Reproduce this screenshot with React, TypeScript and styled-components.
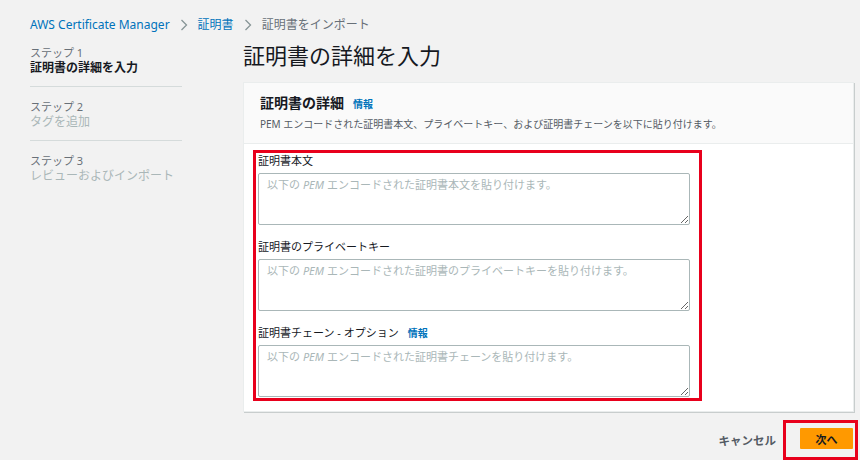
import React from "react";
import styled, { createGlobalStyle } from "styled-components";

const GlobalStyle = createGlobalStyle`
  html, body {
    margin: 0;
    padding: 0;
    background: #f2f3f3;
  }
  body {
    font-family: "Noto Sans", "Noto Sans CJK JP", sans-serif;
    color: #16191f;
  }
`;

const Page = styled.div`
  width: 860px;
  height: 460px;
  box-sizing: border-box;
  padding: 17px 0 0 30px;
  overflow: hidden;
  background: #f2f2f2;
`;

const Breadcrumb = styled.nav`
  display: flex;
  align-items: center;
  gap: 10px;
  height: 16px;
  font-size: 12px;
  line-height: 16px;
`;

const Crumb = styled.span<{ $link?: boolean }>`
  color: ${(p) => (p.$link ? "#0073bb" : "#687078")};
`;

const Layout = styled.div`
  display: grid;
  grid-template-columns: 152px 1fr;
  column-gap: 61px;
  margin-top: 11px;
`;

const Steps = styled.ol`
  list-style: none;
  margin: 0;
  padding: 0;
`;

const Step = styled.li`
  padding: 12px 0 10px;
  border-bottom: 1px solid #d5dbdb;
  &:first-child {
    padding-top: 1px;
  }
  &:last-child {
    border-bottom: none;
  }
`;

const StepLabel = styled.div`
  font-size: 11px;
  line-height: 15px;
  color: #687078;
`;

const StepTitle = styled.div<{ $active?: boolean }>`
  font-size: 12px;
  line-height: 16px;
  font-weight: ${(p) => (p.$active ? 700 : 400)};
  color: ${(p) => (p.$active ? "#16191f" : "#aab7b8")};
`;

const Main = styled.main`
  padding-right: 6px;
`;

const Title = styled.h1`
  margin: 0 0 16px;
  font-size: 22px;
  line-height: 22px;
  font-weight: 400;
  color: #16191f;
`;

const Card = styled.section`
  background: #fff;
  border: 1px solid #eaeded;
  box-shadow: 1px 1px 0 #c8cdcd;
`;

const CardHeader = styled.header`
  background: #fafafa;
  border-bottom: 1px solid #eaeded;
  padding: 11px 16px 12px;
`;

const CardTitle = styled.h2`
  margin: 0;
  display: flex;
  align-items: baseline;
  gap: 9px;
  font-size: 14px;
  line-height: 18px;
  font-weight: 700;
`;

const Info = styled.span`
  font-size: 10px;
  font-weight: 700;
  color: #0073bb;
`;

const CardDesc = styled.p`
  margin: 4px 0 0;
  font-size: 10px;
  line-height: 14px;
  color: #545b64;
`;

const CardBody = styled.div`
  padding: 6px 0 10px 9px;
`;

const Highlight = styled.div`
  border: 3px solid #e8001c;
`;

const Fields = styled(Highlight)`
  width: 432px;
  padding: 0 9px 1px 2px;
`;

const Field = styled.div`
  & + & {
    margin-top: 14px;
  }
`;

const Label = styled.label`
  display: flex;
  align-items: baseline;
  gap: 9px;
  font-size: 11px;
  line-height: 16px;
  color: #16191f;
`;

const InputWrap = styled.div`
  position: relative;
  margin-top: 4px;
`;

const TextArea = styled.textarea`
  display: block;
  width: 100%;
  height: 52px;
  box-sizing: border-box;
  border: 1px solid #aab7b8;
  border-radius: 2px;
  background: #fff;
  resize: vertical;
  font: inherit;
`;

const Placeholder = styled.span`
  position: absolute;
  left: 9px;
  top: 4px;
  font-size: 11px;
  line-height: 16px;
  color: #aab7b8;
  pointer-events: none;
  em {
    font-style: italic;
  }
`;

const Footer = styled.footer`
  display: flex;
  justify-content: flex-end;
  align-items: center;
  gap: 7px;
  margin: 8px -4px 0 0;
`;

const Cancel = styled.button`
  border: none;
  background: none;
  padding: 0;
  font: inherit;
  font-size: 11.5px;
  font-weight: 700;
  color: #545b64;
`;

const ButtonFrame = styled(Highlight)`
  padding: 5px 2px 8px 14px;
`;

const Primary = styled.button`
  display: block;
  width: 53px;
  height: 21px;
  border: none;
  border-radius: 1px;
  background: #ff9900;
  font: inherit;
  font-size: 11px;
  font-weight: 700;
  color: #16191f;
`;

const Chevron = () => (
  <svg width="8" height="12" viewBox="0 0 8 12">
    <path d="M1.5 1l5 5-5 5" fill="none" stroke="#879596" strokeWidth="1.3" />
  </svg>
);

const fields = [
  { label: "証明書本文", ph: "証明書本文を貼り付けます。", info: false },
  { label: "証明書のプライベートキー", ph: "証明書のプライベートキーを貼り付けます。", info: false },
  { label: "証明書チェーン - オプション", ph: "証明書チェーンを貼り付けます。", info: true },
];

export default function App() {
  return (
    <Page>
      <GlobalStyle />
      <Breadcrumb>
        <Crumb $link>AWS Certificate Manager</Crumb>
        <Chevron />
        <Crumb $link>証明書</Crumb>
        <Chevron />
        <Crumb>証明書をインポート</Crumb>
      </Breadcrumb>
      <Layout>
        <Steps>
          <Step>
            <StepLabel>ステップ 1</StepLabel>
            <StepTitle $active>証明書の詳細を入力</StepTitle>
          </Step>
          <Step>
            <StepLabel>ステップ 2</StepLabel>
            <StepTitle>タグを追加</StepTitle>
          </Step>
          <Step>
            <StepLabel>ステップ 3</StepLabel>
            <StepTitle>レビューおよびインポート</StepTitle>
          </Step>
        </Steps>
        <Main>
          <Title>証明書の詳細を入力</Title>
          <Card>
            <CardHeader>
              <CardTitle>
                証明書の詳細 <Info>情報</Info>
              </CardTitle>
              <CardDesc>
                PEM エンコードされた証明書本文、プライベートキー、および証明書チェーンを以下に貼り付けます。
              </CardDesc>
            </CardHeader>
            <CardBody>
              <Fields>
                {fields.map((f) => (
                  <Field key={f.label}>
                    <Label>
                      {f.label}
                      {f.info && <Info>情報</Info>}
                    </Label>
                    <InputWrap>
                      <TextArea aria-label={f.label} />
                      <Placeholder>
                        以下の <em>PEM</em> エンコードされた{f.ph}
                      </Placeholder>
                    </InputWrap>
                  </Field>
                ))}
              </Fields>
            </CardBody>
          </Card>
          <Footer>
            <Cancel>キャンセル</Cancel>
            <ButtonFrame>
              <Primary>次へ</Primary>
            </ButtonFrame>
          </Footer>
        </Main>
      </Layout>
    </Page>
  );
}
